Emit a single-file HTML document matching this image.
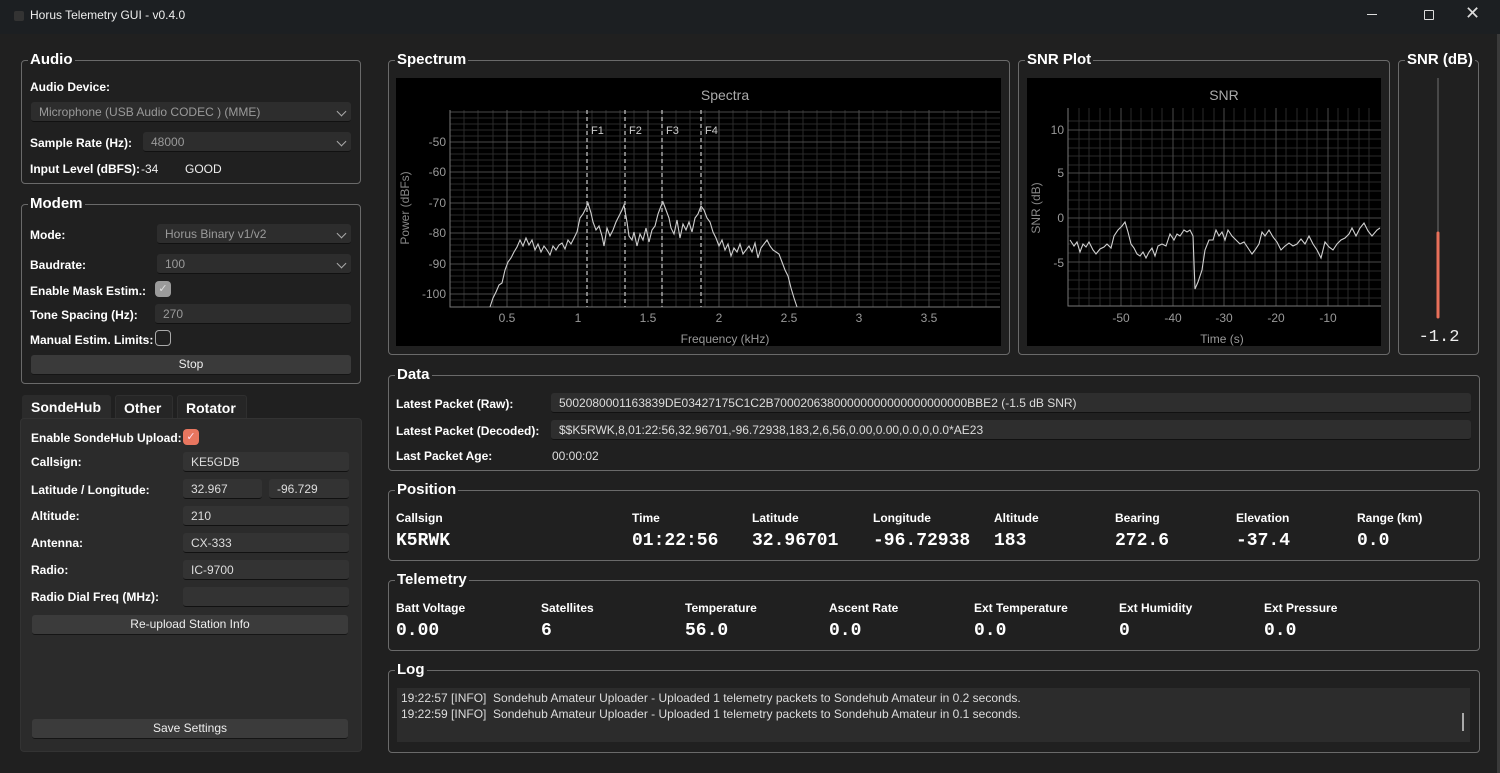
<!DOCTYPE html>
<html><head><meta charset="utf-8"><style>
*{box-sizing:border-box;margin:0;padding:0}
body{width:1500px;height:773px;background:#202020;font-family:"Liberation Sans",sans-serif;color:#fff;position:relative;overflow:hidden;font-size:12px}
.a{position:absolute;white-space:nowrap}
.g{position:absolute;border:1px solid #6a6a6a;border-radius:4px}
.gt{position:absolute;top:-10px;left:6px;background:#202020;padding:0 2px;font-weight:bold;font-size:15px;line-height:18px}
.l{position:absolute;font-weight:bold;font-size:12px;white-space:nowrap}
.f{position:absolute;background:#2d2d2d;border-radius:3px;border-bottom:1px solid #111;color:#ddd;font-size:12px;line-height:20px;padding-left:8px;white-space:nowrap}
.dis{color:#9a9a9a}
.chev{position:absolute;right:6px;top:6px;width:7px;height:7px;border-right:1.3px solid #aaa;border-bottom:1.3px solid #aaa;transform:rotate(45deg)}
.btn{position:absolute;background:#3a3a3a;border-radius:3px;border-bottom:1px solid #151515;text-align:center;font-size:12px;line-height:19px;color:#eee}
.v{position:absolute;font-family:"Liberation Mono",monospace;font-weight:bold;font-size:18px;white-space:nowrap}
</style></head><body>
<div class="a" style="left:0;top:0;width:1500px;height:34px;background:#1c1f22"></div>
<div class="a" style="left:14px;top:11px;width:10px;height:10px;background:#333;border-radius:2px"></div>
<div class="a" style="left:30px;top:8px;font-size:12px;color:#eee">Horus Telemetry GUI - v0.4.0</div>
<div class="a" style="left:1367px;top:14px;width:10px;height:1px;background:#ddd"></div>
<div class="a" style="left:1424px;top:10px;width:10px;height:10px;border:1.2px solid #ddd;border-radius:1px"></div>
<div class="a" style="left:1465px;top:3px;font-size:18px;color:#ddd">✕</div>

<!-- Audio -->
<div class="g" style="left:21px;top:60px;width:340px;height:124px"><div class="gt">Audio</div></div>
<div class="l" style="left:30px;top:80px">Audio Device:</div>
<div class="f dis" style="left:31px;top:102px;width:320px;height:20px">Microphone (USB Audio CODEC ) (MME)<span class="chev"></span></div>
<div class="l" style="left:30px;top:136px">Sample Rate (Hz):</div>
<div class="f dis" style="left:143px;top:132px;width:208px;height:20px">48000<span class="chev"></span></div>
<div class="l" style="left:30px;top:162px">Input Level (dBFS):</div>
<div class="a" style="left:141px;top:162px;color:#eee">-34</div>
<div class="a" style="left:185px;top:162px;color:#eee">GOOD</div>

<!-- Modem -->
<div class="g" style="left:21px;top:204px;width:340px;height:180px"><div class="gt">Modem</div></div>
<div class="l" style="left:30px;top:228px">Mode:</div>
<div class="f dis" style="left:157px;top:224px;width:194px;height:20px">Horus Binary v1/v2<span class="chev"></span></div>
<div class="l" style="left:30px;top:258px">Baudrate:</div>
<div class="f dis" style="left:157px;top:254px;width:194px;height:20px">100<span class="chev"></span></div>
<div class="l" style="left:30px;top:284px">Enable Mask Estim.:</div>
<div class="a" style="left:155px;top:281px;width:16px;height:16px;background:#9b9b9b;border-radius:4px;color:#ddd;font-size:11px;text-align:center;line-height:16px">✓</div>
<div class="l" style="left:30px;top:308px">Tone Spacing (Hz):</div>
<div class="f dis" style="left:155px;top:304px;width:196px;height:20px">270</div>
<div class="l" style="left:30px;top:333px">Manual Estim. Limits:</div>
<div class="a" style="left:155px;top:330px;width:16px;height:16px;border:1.3px solid #aaa;border-radius:4px"></div>
<div class="btn" style="left:31px;top:355px;width:320px;height:20px">Stop</div>

<!-- Tabs -->
<div class="a" style="left:22px;top:395px;width:89px;height:24px;background:#2b2b2b;border-radius:3px 3px 0 0"></div>
<div class="l" style="left:31px;top:399px;font-size:14px">SondeHub</div>
<div class="a" style="left:115px;top:395px;width:58px;height:24px;background:#262626;border-radius:3px 3px 0 0;border:1px solid #2f2f2f"></div>
<div class="l" style="left:124px;top:400px;font-size:14px">Other</div>
<div class="a" style="left:177px;top:395px;width:70px;height:24px;background:#262626;border-radius:3px 3px 0 0;border:1px solid #2f2f2f"></div>
<div class="l" style="left:186px;top:400px;font-size:14px">Rotator</div>
<div class="a" style="left:20px;top:418px;width:342px;height:334px;background:#2b2b2b;border-radius:4px;border:1px solid #333"></div>
<div class="l" style="left:31px;top:431px">Enable SondeHub Upload:</div>
<div class="a" style="left:183px;top:429px;width:16px;height:16px;background:#e8765f;border-radius:4px;color:#fde;font-size:11px;text-align:center;line-height:16px">✓</div>
<div class="l" style="left:31px;top:455px">Callsign:</div>
<div class="f" style="left:183px;top:452px;width:166px;height:20px;background:#333">KE5GDB</div>
<div class="l" style="left:31px;top:483px">Latitude / Longitude:</div>
<div class="f" style="left:183px;top:479px;width:79px;height:20px;background:#333">32.967</div>
<div class="f" style="left:269px;top:479px;width:80px;height:20px;background:#333">-96.729</div>
<div class="l" style="left:31px;top:509px">Altitude:</div>
<div class="f" style="left:183px;top:506px;width:166px;height:20px;background:#333">210</div>
<div class="l" style="left:31px;top:536px">Antenna:</div>
<div class="f" style="left:183px;top:533px;width:166px;height:20px;background:#333">CX-333</div>
<div class="l" style="left:31px;top:563px">Radio:</div>
<div class="f" style="left:183px;top:560px;width:166px;height:20px;background:#333">IC-9700</div>
<div class="l" style="left:31px;top:590px">Radio Dial Freq (MHz):</div>
<div class="f" style="left:183px;top:587px;width:166px;height:20px;background:#333"></div>
<div class="btn" style="left:32px;top:615px;width:316px;height:20px;background:#3b3b3b">Re-upload Station Info</div>
<div class="btn" style="left:32px;top:719px;width:316px;height:20px;background:#3b3b3b">Save Settings</div>

<!-- Spectrum -->
<div class="g" style="left:388px;top:60px;width:622px;height:295px"><div class="gt">Spectrum</div></div>
<div class="g" style="left:1018px;top:60px;width:372px;height:295px"><div class="gt">SNR Plot</div></div>
<div class="g" style="left:1398px;top:60px;width:81px;height:295px"><div class="gt">SNR (dB)</div></div>
<svg class="a" style="left:0;top:0" width="1500" height="360" font-family="Liberation Sans, sans-serif">
<rect x="396" y="78" width="605" height="268" fill="#000"/>
<g stroke="#262626" stroke-width="1">
<path d="M380 0"/>
</g>
<g id="minor" stroke="#2a2a2a">
<path d="M464 110V307M478 110V307M493 110V307M521 110V307M535 110V307M549 110V307M563 110V307M592 110V307M606 110V307M620 110V307M634 110V307M662 110V307M676 110V307M690 110V307M705 110V307M733 110V307M747 110V307M761 110V307M775 110V307M803 110V307M817 110V307M831 110V307M845 110V307M873 110V307M887 110V307M901 110V307M915 110V307M944 110V307M958 110V307M972 110V307M986 110V307"/>
<path d="M450 118H1000M450 124H1000M450 130H1000M450 136H1000M450 148H1000M450 154H1000M450 160H1000M450 166H1000M450 178H1000M450 184H1000M450 190H1000M450 197H1000M450 209H1000M450 215H1000M450 221H1000M450 227H1000M450 239H1000M450 245H1000M450 251H1000M450 257H1000M450 270H1000M450 276H1000M450 282H1000M450 288H1000M450 300H1000"/>
</g>
<g stroke="#4a4a4a">
<path d="M507 110V307M578 110V307M648 110V307M719 110V307M789 110V307M859 110V307M929 110V307"/>
<path d="M450 112H1000M450 142H1000M450 172H1000M450 203H1000M450 233H1000M450 264H1000M450 294H1000"/>
</g>
<path d="M450 110V307H1000" stroke="#777" fill="none"/>
<g stroke="#bbb" stroke-dasharray="4,3" stroke-width="1.3"><path d="M587 110V307M625 110V307M662 110V307M701 110V307"/></g>
<g fill="#ccc" font-size="11"><text x="591" y="134">F1</text><text x="629" y="134">F2</text><text x="666" y="134">F3</text><text x="705" y="134">F4</text></g>
<polyline fill="none" stroke="#cfcfcf" stroke-width="1.1" points="490,307 493,298 496,292 499,285 502,283 505,270 508,262 511,258 514,252 517,247 520,240 523,246 526,238 529,245 532,240 535,250 538,244 541,252 544,246 547,250 550,255 553,246 556,250 559,245 562,243 565,249 568,240 571,244 574,238 577,232 580,218 583,214 586,208 588,203 591,213 593,222 596,230 599,226 602,236 604,246 607,228 610,236 613,230 616,222 619,216 622,210 624,205 627,222 629,236 632,240 634,232 637,246 640,234 643,240 646,228 649,242 652,230 655,226 658,214 661,206 663,202 666,210 669,218 671,228 674,234 677,220 680,238 683,224 686,230 689,222 692,232 695,218 698,214 701,206 704,210 707,218 710,222 713,232 716,238 719,246 722,240 725,250 728,244 731,256 734,248 737,252 740,244 743,254 746,250 749,246 752,252 755,243 758,258 761,248 764,244 767,240 770,246 773,250 776,252 779,254 782,262 785,270 788,276 791,288 794,298 797,307"/>
<g fill="#999" font-size="12" text-anchor="end"><text x="446" y="146">-50</text><text x="446" y="176">-60</text><text x="446" y="207">-70</text><text x="446" y="237">-80</text><text x="446" y="268">-90</text><text x="446" y="298">-100</text></g>
<g fill="#999" font-size="12" text-anchor="middle"><text x="507" y="322">0.5</text><text x="578" y="322">1</text><text x="648" y="322">1.5</text><text x="719" y="322">2</text><text x="789" y="322">2.5</text><text x="859" y="322">3</text><text x="929" y="322">3.5</text>
<text x="725" y="343">Frequency (kHz)</text><text x="725" y="100" font-size="14" fill="#aaa">Spectra</text></g>
<text transform="translate(409,208) rotate(-90)" fill="#888" font-size="12" text-anchor="middle">Power (dBFs)</text>

<rect x="1027" y="78" width="354" height="268" fill="#000"/>
<g stroke="#2a2a2a"><path d="M1079 108V306M1089 108V306M1100 108V306M1110 108V306M1131 108V306M1141 108V306M1152 108V306M1162 108V306M1183 108V306M1193 108V306M1203 108V306M1214 108V306M1234 108V306M1245 108V306M1255 108V306M1265 108V306M1286 108V306M1297 108V306M1307 108V306M1317 108V306M1338 108V306M1348 108V306M1359 108V306M1369 108V306"/>
<path d="M1068 121H1381M1068 139H1381M1068 148H1381M1068 156H1381M1068 165H1381M1068 182H1381M1068 191H1381M1068 200H1381M1068 209H1381M1068 227H1381M1068 236H1381M1068 244H1381M1068 253H1381M1068 271H1381M1068 280H1381M1068 289H1381M1068 298H1381"/></g>
<g stroke="#4a4a4a"><path d="M1121 108V306M1173 108V306M1224 108V306M1276 108V306M1328 108V306M1068 130H1381M1068 173H1381M1068 218H1381M1068 262H1381"/></g>
<path d="M1068 108V306H1381" stroke="#777" fill="none"/>
<polyline fill="none" stroke="#d0d0d0" stroke-width="1.1" points="1070,240 1074,246 1077,242 1080,252 1083,244 1086,247 1089,242 1093,250 1096,254 1100,249 1104,247 1107,244 1111,248 1114,236 1118,230 1122,226 1125,222 1128,232 1131,244 1134,248 1137,254 1140,256 1143,252 1146,258 1149,252 1152,248 1155,256 1158,246 1162,244 1166,246 1170,234 1174,240 1177,234 1180,236 1184,230 1187,232 1190,230 1193,236 1195,289 1198,282 1202,270 1205,250 1209,240 1213,240 1216,230 1219,236 1222,232 1225,240 1228,230 1232,236 1236,240 1240,244 1244,242 1248,248 1252,254 1255,250 1259,244 1262,232 1265,236 1269,230 1273,237 1277,242 1281,250 1285,246 1289,243 1293,246 1297,244 1301,239 1305,244 1309,236 1313,244 1317,250 1321,258 1325,242 1329,247 1333,250 1337,244 1341,240 1345,238 1349,234 1352,228 1356,236 1360,228 1364,223 1368,231 1372,236 1377,230 1380,228"/>
<g fill="#999" font-size="12" text-anchor="end"><text x="1064" y="134">10</text><text x="1064" y="177">5</text><text x="1064" y="222">0</text><text x="1064" y="267">-5</text></g>
<g fill="#999" font-size="12" text-anchor="middle"><text x="1121" y="322">-50</text><text x="1173" y="322">-40</text><text x="1224" y="322">-30</text><text x="1276" y="322">-20</text><text x="1328" y="322">-10</text>
<text x="1222" y="343">Time (s)</text><text x="1224" y="100" font-size="14" fill="#aaa">SNR</text></g>
<text transform="translate(1040,208) rotate(-90)" fill="#888" font-size="12" text-anchor="middle">SNR (dB)</text>

<line x1="1438" y1="78" x2="1438" y2="318" stroke="#555" stroke-width="1.5"/>
<line x1="1438" y1="233" x2="1438" y2="317" stroke="#e8705a" stroke-width="3" stroke-linecap="round"/>
<text x="1439" y="341" fill="#eee" font-family="Liberation Mono, monospace" font-size="17" text-anchor="middle">-1.2</text>
</svg>

<!-- Data -->
<div class="g" style="left:388px;top:375px;width:1092px;height:96px"><div class="gt">Data</div></div>
<div class="l" style="left:396px;top:397px">Latest Packet (Raw):</div>
<div class="f" style="left:551px;top:393px;width:920px;height:20px;background:#2e2e2e">5002080001163839DE03427175C1C2B70002063800000000000000000000BBE2 (-1.5 dB SNR)</div>
<div class="l" style="left:396px;top:424px">Latest Packet (Decoded):</div>
<div class="f" style="left:551px;top:420px;width:920px;height:20px;background:#2e2e2e">$$K5RWK,8,01:22:56,32.96701,-96.72938,183,2,6,56,0.00,0.00,0.0,0,0.0*AE23</div>
<div class="l" style="left:396px;top:449px">Last Packet Age:</div>
<div class="a" style="left:552px;top:449px;color:#ddd">00:00:02</div>

<!-- Position -->
<div class="g" style="left:388px;top:490px;width:1092px;height:71px"><div class="gt">Position</div></div>
<div class="l" style="left:396px;top:511px">Callsign</div><div class="v" style="left:396px;top:531px">K5RWK</div>
<div class="l" style="left:632px;top:511px">Time</div><div class="v" style="left:632px;top:531px">01:22:56</div>
<div class="l" style="left:752px;top:511px">Latitude</div><div class="v" style="left:752px;top:531px">32.96701</div>
<div class="l" style="left:873px;top:511px">Longitude</div><div class="v" style="left:873px;top:531px">-96.72938</div>
<div class="l" style="left:994px;top:511px">Altitude</div><div class="v" style="left:994px;top:531px">183</div>
<div class="l" style="left:1115px;top:511px">Bearing</div><div class="v" style="left:1115px;top:531px">272.6</div>
<div class="l" style="left:1236px;top:511px">Elevation</div><div class="v" style="left:1236px;top:531px">-37.4</div>
<div class="l" style="left:1357px;top:511px">Range (km)</div><div class="v" style="left:1357px;top:531px">0.0</div>

<!-- Telemetry -->
<div class="g" style="left:388px;top:580px;width:1092px;height:71px"><div class="gt">Telemetry</div></div>
<div class="l" style="left:396px;top:601px">Batt Voltage</div><div class="v" style="left:396px;top:621px">0.00</div>
<div class="l" style="left:541px;top:601px">Satellites</div><div class="v" style="left:541px;top:621px">6</div>
<div class="l" style="left:685px;top:601px">Temperature</div><div class="v" style="left:685px;top:621px">56.0</div>
<div class="l" style="left:829px;top:601px">Ascent Rate</div><div class="v" style="left:829px;top:621px">0.0</div>
<div class="l" style="left:974px;top:601px">Ext Temperature</div><div class="v" style="left:974px;top:621px">0.0</div>
<div class="l" style="left:1119px;top:601px">Ext Humidity</div><div class="v" style="left:1119px;top:621px">0</div>
<div class="l" style="left:1264px;top:601px">Ext Pressure</div><div class="v" style="left:1264px;top:621px">0.0</div>

<!-- Log -->
<div class="g" style="left:388px;top:670px;width:1092px;height:83px"><div class="gt">Log</div></div>
<div class="a" style="left:397px;top:688px;width:1073px;height:54px;background:#2c2c2c"></div>
<div class="a" style="left:401px;top:690px;color:#ddd;font-size:12px;line-height:16px">19:22:57 [INFO]&nbsp; Sondehub Amateur Uploader - Uploaded 1 telemetry packets to Sondehub Amateur in 0.2 seconds.<br>19:22:59 [INFO]&nbsp; Sondehub Amateur Uploader - Uploaded 1 telemetry packets to Sondehub Amateur in 0.1 seconds.</div>
<div class="a" style="left:1462px;top:713px;width:2px;height:18px;background:#aaa"></div>
<div class="a" style="left:1497px;top:34px;width:3px;height:739px;background:#3a3a3a"></div>
</body></html>
